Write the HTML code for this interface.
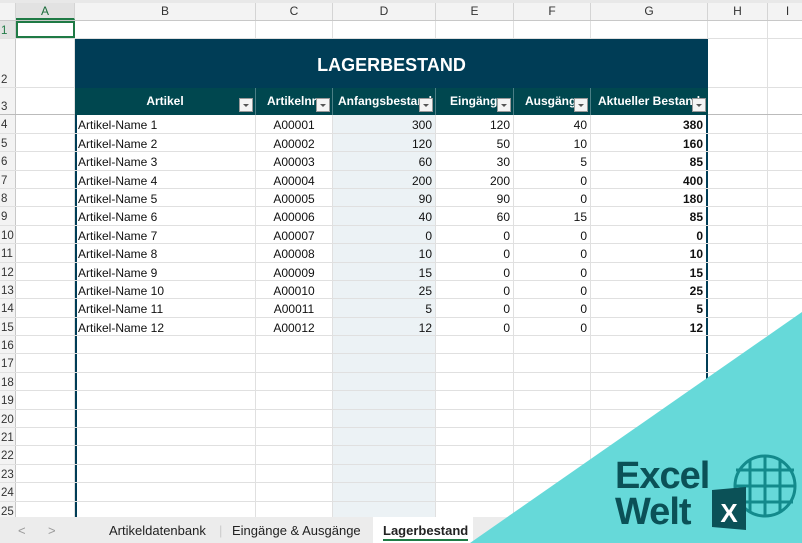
<!DOCTYPE html>
<html><head><meta charset="utf-8"><style>
*{box-sizing:border-box;margin:0;padding:0}
body{width:802px;height:543px;overflow:hidden;background:#fff;font-family:"Liberation Sans",Arial,sans-serif;font-size:12px;color:#111;position:relative}
.r{display:flex;height:18.4px;border-bottom:1px solid #e0e0e0}
.c{flex:none;border-right:1px solid #e0e0e0;line-height:20px;white-space:nowrap;overflow:hidden;padding:0 3px}
.h{width:16px;background:#f3f3f3;color:#333;padding-left:1px;font-size:11.5px;border-right:1px solid #c8c8c8}
.a{width:59px}.b{width:181px}.cc{width:77px;text-align:center}.d{width:103px;text-align:right;background:#ecf2f5}.e{width:78px;text-align:right}.f{width:77px;text-align:right}.g{width:117px;text-align:right;font-weight:bold}.hh{width:60px}.i{width:40px}
.b{border-left:2px solid #003d56;padding-left:1px}
.g{border-right:2px solid #003d56}
#top{position:absolute;left:0;top:0;width:802px;height:21px;background:#f3f3f3;border-top:3px solid #e8e8e8;border-bottom:1px solid #c8c8c8;display:flex}
#top div{flex:none;text-align:center;line-height:17px;color:#333;border-right:1px solid #d4d4d4}
#grid{position:absolute;left:0;top:21px}
.title{position:absolute;left:75px;top:39px;width:633px;height:49px;background:#003d56;color:#fff;font-weight:bold;font-size:18px;text-align:center;line-height:52px}
.hdr{position:absolute;left:75px;top:88px;width:633px;height:27px;background:#00474f;display:flex;color:#fff;font-weight:bold}
.hdr div{flex:none;position:relative;line-height:27px;text-align:center;overflow:hidden;white-space:nowrap;border-right:1px solid #4b7f86}
.dd{position:absolute;right:2px;top:10px;width:14px;height:14px;background:#f4f4f4;border:1px solid #999}
.dd:after{content:"";position:absolute;left:3px;top:5px;border:3px solid transparent;border-top:3px solid #555}
#tabs{position:absolute;left:0;top:517px;width:802px;height:26px;background:#ececec;font-size:13px;color:#222}
#tabs span{position:absolute;top:6px}
</style></head><body>
<div id="top">
<div style="width:16px"></div><div style="width:59px;background:#e2e2e2;color:#1a6b3a;border-bottom:2px solid #1f7a45">A</div><div style="width:181px">B</div><div style="width:77px">C</div><div style="width:103px">D</div><div style="width:78px">E</div><div style="width:77px">F</div><div style="width:117px">G</div><div style="width:60px">H</div><div style="width:40px">I</div>
</div>
<div id="grid">
<div class="r"><div class="c h" style="color:#1f7a45;background:#e2e2e2">1</div><div class="c a" style="border:2px solid #1f7a45"></div><div class="c" style="width:181px"></div><div class="c cc"></div><div class="c" style="width:103px"></div><div class="c e"></div><div class="c f"></div><div class="c" style="width:117px"></div><div class="c hh"></div><div class="c i"></div></div>
<div class="r" style="height:49px"><div class="c h" style="line-height:82px">2</div><div class="c a"></div><div class="c" style="width:633px"></div><div class="c hh"></div><div class="c i"></div></div>
<div class="r" style="height:27px;border-bottom:1px solid #bbb"><div class="c h" style="line-height:38px">3</div><div class="c a"></div><div class="c" style="width:633px"></div><div class="c hh"></div><div class="c i"></div></div>
<div class="r"><div class="c h">4</div><div class="c a"></div><div class="c b">Artikel-Name 1</div><div class="c cc">A00001</div><div class="c d">300</div><div class="c e">120</div><div class="c f">40</div><div class="c g">380</div><div class="c hh"></div><div class="c i"></div></div>
<div class="r"><div class="c h">5</div><div class="c a"></div><div class="c b">Artikel-Name 2</div><div class="c cc">A00002</div><div class="c d">120</div><div class="c e">50</div><div class="c f">10</div><div class="c g">160</div><div class="c hh"></div><div class="c i"></div></div>
<div class="r"><div class="c h">6</div><div class="c a"></div><div class="c b">Artikel-Name 3</div><div class="c cc">A00003</div><div class="c d">60</div><div class="c e">30</div><div class="c f">5</div><div class="c g">85</div><div class="c hh"></div><div class="c i"></div></div>
<div class="r"><div class="c h">7</div><div class="c a"></div><div class="c b">Artikel-Name 4</div><div class="c cc">A00004</div><div class="c d">200</div><div class="c e">200</div><div class="c f">0</div><div class="c g">400</div><div class="c hh"></div><div class="c i"></div></div>
<div class="r"><div class="c h">8</div><div class="c a"></div><div class="c b">Artikel-Name 5</div><div class="c cc">A00005</div><div class="c d">90</div><div class="c e">90</div><div class="c f">0</div><div class="c g">180</div><div class="c hh"></div><div class="c i"></div></div>
<div class="r"><div class="c h">9</div><div class="c a"></div><div class="c b">Artikel-Name 6</div><div class="c cc">A00006</div><div class="c d">40</div><div class="c e">60</div><div class="c f">15</div><div class="c g">85</div><div class="c hh"></div><div class="c i"></div></div>
<div class="r"><div class="c h">10</div><div class="c a"></div><div class="c b">Artikel-Name 7</div><div class="c cc">A00007</div><div class="c d">0</div><div class="c e">0</div><div class="c f">0</div><div class="c g">0</div><div class="c hh"></div><div class="c i"></div></div>
<div class="r"><div class="c h">11</div><div class="c a"></div><div class="c b">Artikel-Name 8</div><div class="c cc">A00008</div><div class="c d">10</div><div class="c e">0</div><div class="c f">0</div><div class="c g">10</div><div class="c hh"></div><div class="c i"></div></div>
<div class="r"><div class="c h">12</div><div class="c a"></div><div class="c b">Artikel-Name 9</div><div class="c cc">A00009</div><div class="c d">15</div><div class="c e">0</div><div class="c f">0</div><div class="c g">15</div><div class="c hh"></div><div class="c i"></div></div>
<div class="r"><div class="c h">13</div><div class="c a"></div><div class="c b">Artikel-Name 10</div><div class="c cc">A00010</div><div class="c d">25</div><div class="c e">0</div><div class="c f">0</div><div class="c g">25</div><div class="c hh"></div><div class="c i"></div></div>
<div class="r"><div class="c h">14</div><div class="c a"></div><div class="c b">Artikel-Name 11</div><div class="c cc">A00011</div><div class="c d">5</div><div class="c e">0</div><div class="c f">0</div><div class="c g">5</div><div class="c hh"></div><div class="c i"></div></div>
<div class="r"><div class="c h">15</div><div class="c a"></div><div class="c b">Artikel-Name 12</div><div class="c cc">A00012</div><div class="c d">12</div><div class="c e">0</div><div class="c f">0</div><div class="c g">12</div><div class="c hh"></div><div class="c i"></div></div>
<div class="r"><div class="c h">16</div><div class="c a"></div><div class="c b"></div><div class="c cc"></div><div class="c d"></div><div class="c e"></div><div class="c f"></div><div class="c g"></div><div class="c hh"></div><div class="c i"></div></div>
<div class="r"><div class="c h">17</div><div class="c a"></div><div class="c b"></div><div class="c cc"></div><div class="c d"></div><div class="c e"></div><div class="c f"></div><div class="c g"></div><div class="c hh"></div><div class="c i"></div></div>
<div class="r"><div class="c h">18</div><div class="c a"></div><div class="c b"></div><div class="c cc"></div><div class="c d"></div><div class="c e"></div><div class="c f"></div><div class="c g"></div><div class="c hh"></div><div class="c i"></div></div>
<div class="r"><div class="c h">19</div><div class="c a"></div><div class="c b"></div><div class="c cc"></div><div class="c d"></div><div class="c e"></div><div class="c f"></div><div class="c g"></div><div class="c hh"></div><div class="c i"></div></div>
<div class="r"><div class="c h">20</div><div class="c a"></div><div class="c b"></div><div class="c cc"></div><div class="c d"></div><div class="c e"></div><div class="c f"></div><div class="c g"></div><div class="c hh"></div><div class="c i"></div></div>
<div class="r"><div class="c h">21</div><div class="c a"></div><div class="c b"></div><div class="c cc"></div><div class="c d"></div><div class="c e"></div><div class="c f"></div><div class="c g"></div><div class="c hh"></div><div class="c i"></div></div>
<div class="r"><div class="c h">22</div><div class="c a"></div><div class="c b"></div><div class="c cc"></div><div class="c d"></div><div class="c e"></div><div class="c f"></div><div class="c g"></div><div class="c hh"></div><div class="c i"></div></div>
<div class="r"><div class="c h">23</div><div class="c a"></div><div class="c b"></div><div class="c cc"></div><div class="c d"></div><div class="c e"></div><div class="c f"></div><div class="c g"></div><div class="c hh"></div><div class="c i"></div></div>
<div class="r"><div class="c h">24</div><div class="c a"></div><div class="c b"></div><div class="c cc"></div><div class="c d"></div><div class="c e"></div><div class="c f"></div><div class="c g"></div><div class="c hh"></div><div class="c i"></div></div>
<div class="r"><div class="c h">25</div><div class="c a"></div><div class="c b"></div><div class="c cc"></div><div class="c d"></div><div class="c e"></div><div class="c f"></div><div class="c g"></div><div class="c hh"></div><div class="c i"></div></div>
</div>
<div class="title">LAGERBESTAND</div>
<div class="hdr">
<div style="width:181px">Artikel<span class="dd"></span></div>
<div style="width:77px;text-align:left;padding-left:11px">Artikelnr<span class="dd"></span></div>
<div style="width:103px;text-align:left;padding-left:5px">Anfangsbestand<span class="dd"></span></div>
<div style="width:78px;text-align:left;padding-left:14px">Eingänge<span class="dd"></span></div>
<div style="width:77px;text-align:left;padding-left:11px">Ausgänge<span class="dd"></span></div>
<div style="width:117px;text-align:left;padding-left:7px;border-right:none">Aktueller Bestand<span class="dd"></span></div>
</div>
<div id="tabs">
<span style="left:18px;color:#999">&lt;</span><span style="left:48px;color:#999">&gt;</span>
<span style="left:109px">Artikeldatenbank</span>
<span style="left:219px;color:#ccc">|</span>
<span style="left:232px">Eingänge &amp; Ausgänge</span>
<span style="left:373px;top:0;width:100px;height:26px;background:#fff"></span>
<span style="left:383px;font-weight:bold;border-bottom:2px solid #1f7a45;padding-bottom:1px">Lagerbestand</span>
</div>
<svg style="position:absolute;left:0;top:0" width="802" height="543">
<polygon points="470,543 802,312 802,543" fill="#66d9d9"/>
<text x="615" y="488" font-family="Liberation Sans" font-weight="bold" font-size="38" fill="#0b5157" letter-spacing="-1">Excel</text>
<text x="615" y="524" font-family="Liberation Sans" font-weight="bold" font-size="38" fill="#0b5157" letter-spacing="-1">Welt</text>
<g fill="none" stroke="#138a8c" stroke-width="3">
<circle cx="765" cy="486" r="30"/>
<line x1="736" y1="470" x2="794" y2="470"/><line x1="735" y1="486" x2="795" y2="486"/><line x1="737" y1="502" x2="793" y2="502"/>
<line x1="750" y1="459" x2="750" y2="513"/><line x1="765" y1="456" x2="765" y2="516"/><line x1="780" y1="459" x2="780" y2="513"/>
</g>
<polygon points="712,490 746,487 746,530 712,527" fill="#0b5157"/>
<text x="729" y="522" text-anchor="middle" font-family="Liberation Sans" font-weight="bold" font-size="26" fill="#fff">X</text>
</svg>
</body></html>
